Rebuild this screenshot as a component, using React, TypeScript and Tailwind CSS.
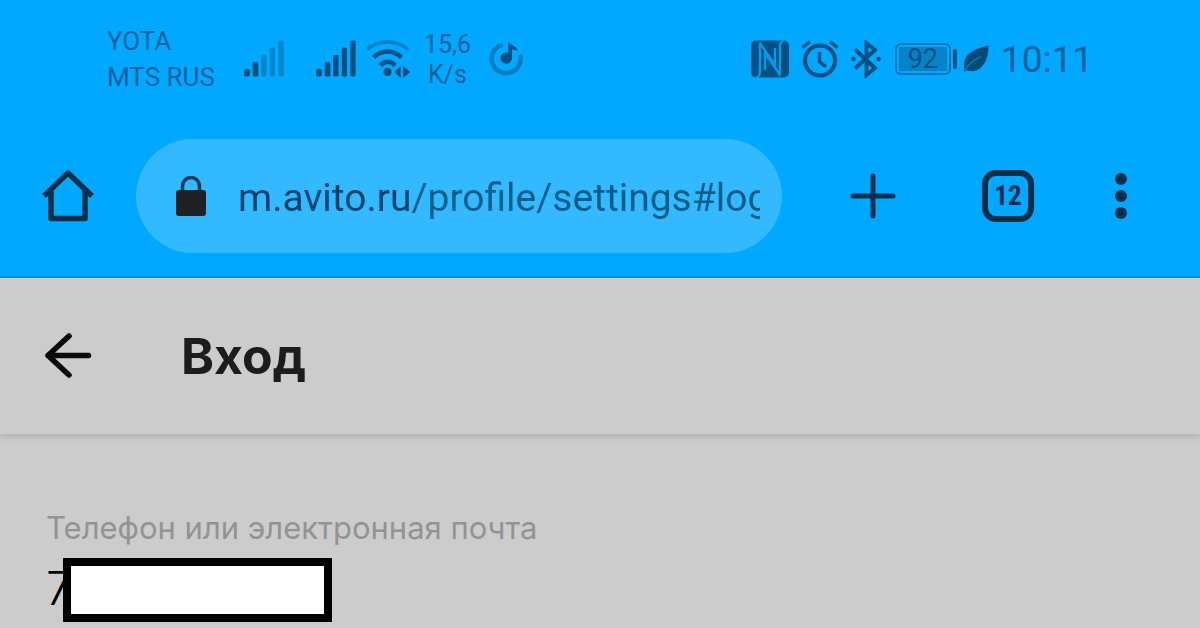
import { useState } from "react";

function SignalIcon({ weak = false }: { weak?: boolean }) {
  const rest = weak ? 0.4 : 1;
  return (
    <svg width="40" height="38" viewBox="0 0 40 38" fill="#045081" aria-hidden="true">
      <rect x="0" y="29" width="6" height="7.5" rx="2" />
      <rect x="8.6" y="22" width="5.8" height="14.5" rx="1.6" />
      <rect x="17.2" y="15" width="5.4" height="21.5" rx="1.4" opacity={rest} />
      <rect x="25.8" y="7.5" width="5.2" height="29" rx="1.4" opacity={rest} />
      <rect x="34.4" y="0.5" width="5.2" height="36" rx="1.4" opacity={rest} />
    </svg>
  );
}

function WifiIcon() {
  return (
    <svg width="44" height="38" viewBox="0 0 44 38" fill="none" stroke="#045081" strokeWidth="4.5" aria-hidden="true">
      <path d="M1 9.5C13 -0.5 30 -0.5 42 9.5" strokeWidth="3.5" opacity="0.45" />
      <path d="M7.5 17.5C15.5 9.5 27.5 9.5 35.5 17.5" />
      <path d="M14.5 25.5C19 20.5 24.5 20.5 29 25.5" />
      <circle cx="21.5" cy="32" r="4" fill="#045081" stroke="none" />
      <path d="M28 32L34.8 26V38ZM44 32L37.2 26V38Z" fill="#045081" stroke="none" />
    </svg>
  );
}

function MusicIcon() {
  return (
    <svg width="36" height="36" viewBox="0 0 36 36" fill="none" aria-hidden="true">
      <path d="M14 3.5A14.5 14.5 0 1 0 31 13.5" stroke="#045081" strokeWidth="4.5" opacity="0.5" />
      <circle cx="17.3" cy="17" r="5.8" fill="#045081" />
      <path d="M19.3 17V1C22 4.500 27 5 29.300 9.500C27 9 25 9 23 8.500V17Z" fill="#045081" />
    </svg>
  );
}

function NfcIcon() {
  return (
    <svg width="38" height="38" viewBox="0 0 38 38" aria-hidden="true">
      <rect x="0" y="0.5" width="38" height="37" rx="5" fill="#045081" />
      <g fill="none" stroke="#029bec" strokeWidth="2.4">
        <path d="M5 38Q9 36 9 32V4" />
        <path d="M8.5 2.5L24 25V8" />
        <path d="M33 0Q29 2 29 6V34" />
        <path d="M29.5 35.5L14 13V30" />
      </g>
    </svg>
  );
}

function AlarmIcon() {
  return (
    <svg width="38" height="38" viewBox="0 0 38 38" fill="none" stroke="#045081" strokeWidth="4" aria-hidden="true">
      <circle cx="19" cy="20.5" r="15" />
      <path d="M18.5 12V21.5L25 27" strokeWidth="3.5" />
      <path d="M1.5 7.5L9 1.5M36.5 7.5L29 1.5" strokeWidth="3.5" />
    </svg>
  );
}

function BluetoothIcon() {
  return (
    <svg width="30" height="38" viewBox="0 0 30 38" fill="none" stroke="#045081" strokeWidth="3.8" aria-hidden="true">
      <path d="M4 9.5L24 28L15.5 35V3L24 10L4 28.5" />
      <circle cx="2.5" cy="19" r="2.2" fill="#045081" stroke="none" />
      <circle cx="27.5" cy="19" r="2.2" fill="#045081" stroke="none" />
    </svg>
  );
}

function LeafIcon() {
  return (
    <svg width="26" height="28" viewBox="0 0 26 28" aria-hidden="true">
      <path d="M25.5 0.5C14 3.5 2 7.5 1 18.5C0.7 21 1 22.5 1.5 24L0.5 27L4 25.5C15 29 25.5 20 25.5 0.5Z" fill="#044a75" />
      <path d="M2 25.5C6 18.5 11 14.5 18 11.5" fill="none" stroke="#0286cb" strokeWidth="1.3" />
    </svg>
  );
}

function HomeIcon() {
  return (
    <svg width="56" height="56" viewBox="0 0 56 56" fill="none" stroke="#062f4c" strokeWidth="5.5" strokeLinejoin="round" aria-hidden="true">
      <path d="M4 28L28 5L52 28" />
      <path d="M11 23V50.5H45V23" />
    </svg>
  );
}

function LockIcon() {
  return (
    <svg width="30" height="40" viewBox="0 0 30 40" aria-hidden="true">
      <path d="M6.5 15V10A8.5 8.5 0 0 1 23.5 10V15" fill="none" stroke="#123c57" strokeWidth="3.5" />
      <rect x="0" y="14" width="30" height="26" rx="3" fill="#202124" />
    </svg>
  );
}

export default function App() {
  const [url, setUrl] = useState("m.avito.ru/profile/settings#login");
  const [login, setLogin] = useState("7");

  return (
    <div className="min-h-screen overflow-hidden bg-[#cccccc] font-[Roboto,sans-serif]">
      <header className="border-b-2 border-[#1c8ccc] bg-[#00a8ff]">
        <div className="flex h-[118px] items-center justify-between pr-[107px] pl-[107px] text-[#04609a]">
          <div className="flex items-center">
            <div className="text-[26px] leading-9">
              <p>YOTA</p>
              <p>MTS RUS</p>
            </div>
            <div className="ml-[29px] flex items-center">
              <SignalIcon weak />
              <div className="ml-8 flex items-center gap-2.5">
                <SignalIcon />
                <WifiIcon />
              </div>
            </div>
            <div className="ml-[14px] pt-0.5 text-center text-[25px] leading-[30px]">
              <p>15,6</p>
              <p>K/s</p>
            </div>
            <div className="ml-[18px]">
              <MusicIcon />
            </div>
          </div>
          <div className="flex items-center gap-3">
            <NfcIcon />
            <AlarmIcon />
            <BluetoothIcon />
            <div className="ml-0.5 flex items-center gap-1.5">
              <div className="flex items-center gap-0.5">
                <div className="rounded-md border-2 border-[#0476b8] p-0.5">
                  <div className="flex h-6 w-12 items-center justify-center bg-[#0583c8] text-[27px] text-[#045081]">92</div>
                </div>
                <div className="h-5 w-1 rounded-sm bg-[#045081]" />
              </div>
              <LeafIcon />
            </div>
            <time className="text-[37px] leading-none">10:11</time>
          </div>
        </div>

        <nav className="flex items-center pt-[21px] pr-[51px] pb-[23px] pl-10 text-[#062f4c]">
          <button type="button" aria-label="Домой" className="size-14">
            <HomeIcon />
          </button>
          <div className="ml-10 flex h-[114px] min-w-0 flex-1 items-center rounded-full bg-[#33b9ff] pr-[22px] pl-10">
            <LockIcon />
            <input
              type="text"
              aria-label="Адрес страницы"
              value={url}
              onChange={(e) => setUrl(e.target.value)}
              className="ml-8 h-16 min-w-0 flex-1 bg-[linear-gradient(to_right,#04426b_173px,#0b5d87_173px)] bg-clip-text pt-1 text-[39px] text-transparent outline-none"
            />
          </div>
          <button type="button" aria-label="Новая вкладка" className="ml-[63px] flex size-14 items-center justify-center">
            <svg width="46" height="46" viewBox="0 0 46 46" fill="none" stroke="#062f4c" strokeWidth="5" strokeLinecap="round" aria-hidden="true">
              <path d="M23 3V43M3 23H43" />
            </svg>
          </button>
          <button type="button" aria-label="Вкладки" className="ml-[79px] flex size-14 items-center justify-center">
            <span className="flex size-[52px] items-center justify-center rounded-[14px] border-[6px] border-[#062f4c] font-['Roboto_Condensed',Roboto,sans-serif] text-[27px] font-bold">12</span>
          </button>
          <button type="button" aria-label="Меню" className="ml-[57px] flex size-14 items-center justify-center">
            <svg width="14" height="46" viewBox="0 0 14 46" fill="#062f4c" aria-hidden="true">
              <circle cx="7" cy="6" r="6" />
              <circle cx="7" cy="23" r="6" />
              <circle cx="7" cy="40" r="6" />
            </svg>
          </button>
        </nav>
      </header>

      <main className="font-[Inter,sans-serif]">
        <div className="flex h-[158px] items-center border-b-2 border-[#bababa] pl-11 shadow-[0_2px_5px_rgba(0,0,0,0.1)]">
          <button type="button" aria-label="Назад" className="size-12">
            <svg width="48" height="48" viewBox="0 0 48 48" fill="none" stroke="#0a0a0a" strokeWidth="5.5" strokeLinecap="round" strokeLinejoin="round" aria-hidden="true">
              <path d="M25 4L4 23.5L25 43M4 23.5H44.5" />
            </svg>
          </button>
          <h1 className="ml-[89px] text-[50px] leading-none font-bold text-[#1c1c1c]">Вход</h1>
        </div>

        <form className="px-[46px] pt-[72px]">
          <label htmlFor="login" className="block text-[31px] leading-10 text-[#939393]">
            Телефон или электронная почта
          </label>
          <div className="relative mt-2">
            <input
              id="login"
              type="text"
              value={login}
              onChange={(e) => setLogin(e.target.value)}
              className="block h-16 w-full bg-transparent text-[46px] font-light text-black outline-none"
            />
            <div className="absolute top-0.5 left-[17px] h-16 w-[269px] border-8 border-black bg-white" />
          </div>
        </form>
      </main>
    </div>
  );
}
